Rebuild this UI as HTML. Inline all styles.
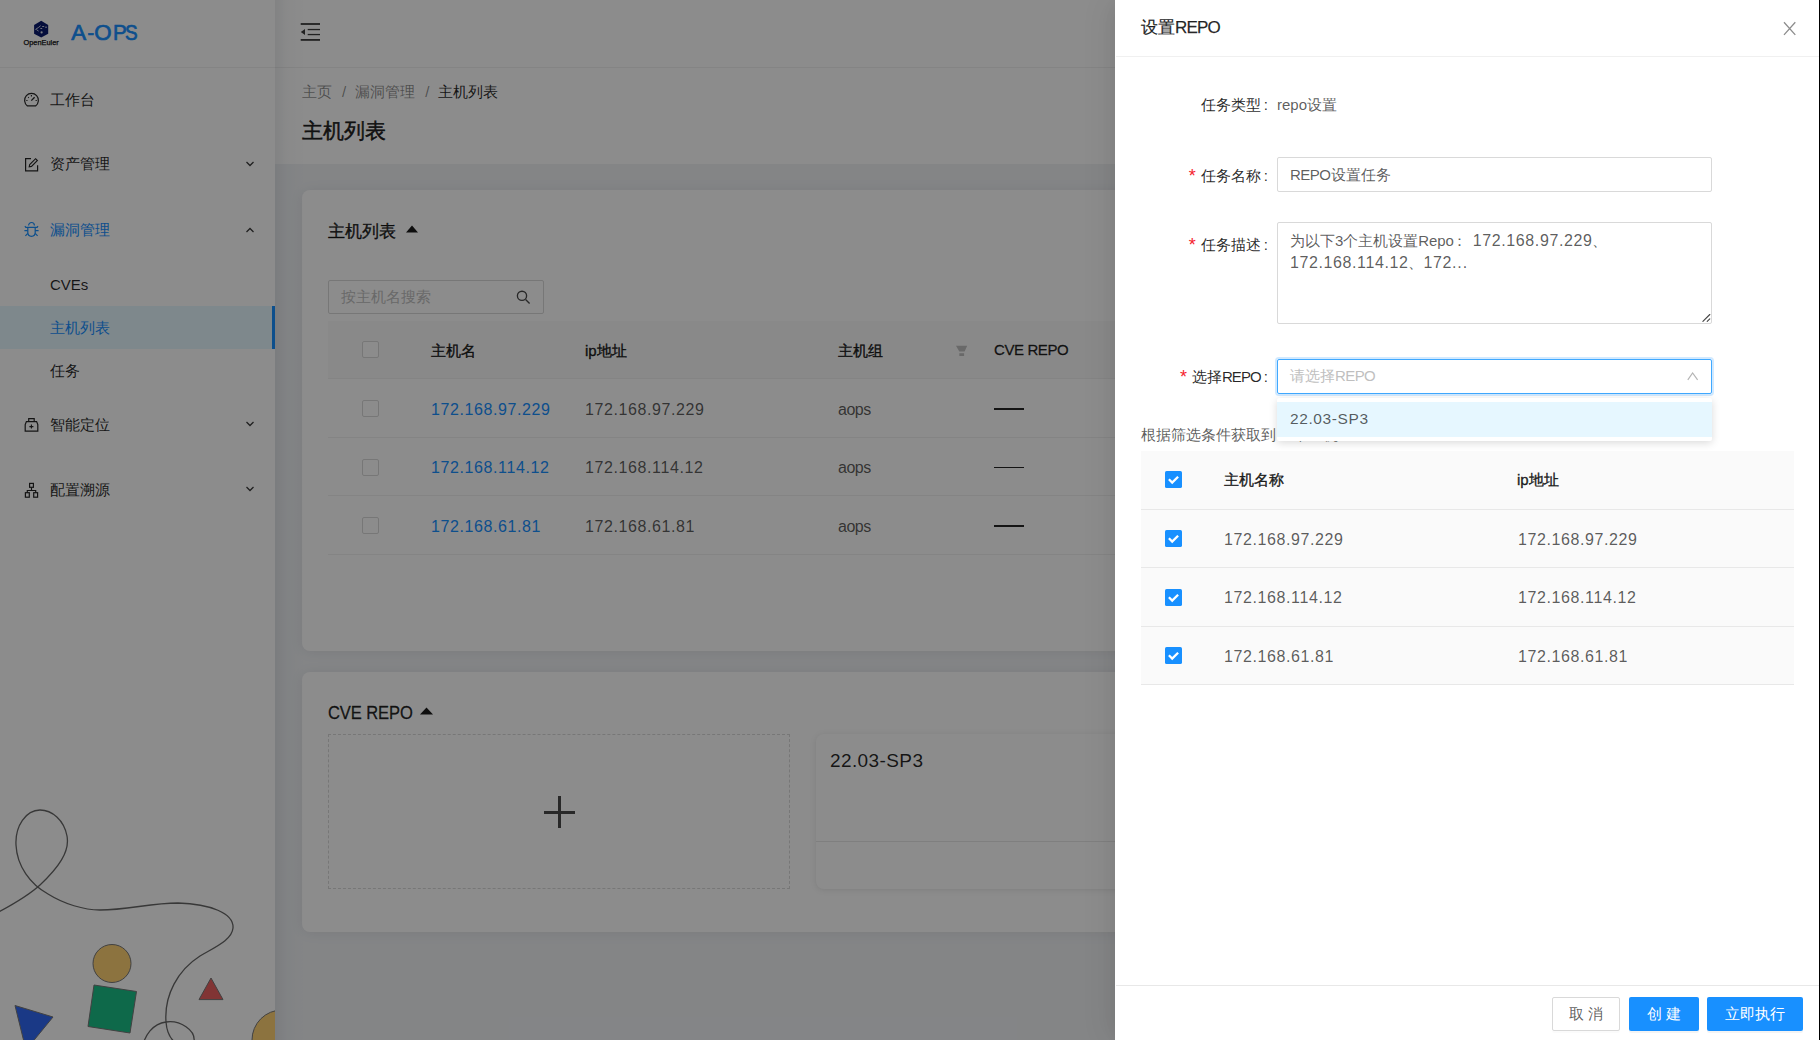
<!DOCTYPE html>
<html><head><meta charset="utf-8">
<style>
*{box-sizing:border-box;margin:0;padding:0}
html,body{width:1820px;height:1040px;overflow:hidden}
body{position:relative;font-family:"Liberation Sans",sans-serif;color:rgba(0,0,0,.85);background:#f0f2f5}
.abs{position:absolute;white-space:nowrap}
.sider{position:absolute;left:0;top:0;width:275px;height:1040px;background:#fff;overflow:hidden;z-index:2}
.sidershadow{position:absolute;left:275px;top:0;width:30px;height:1040px;background:linear-gradient(to right,rgba(0,21,41,.07),rgba(0,21,41,.02) 40%,rgba(0,21,41,0));z-index:3}
.hdr{position:absolute;left:275px;top:0;width:1545px;height:68px;background:#fff;border-bottom:1px solid #f0f0f0}
.pghdr{position:absolute;left:275px;top:68px;width:1545px;height:96px;background:#fff}
.card{position:absolute;background:#fff;border-radius:8px;box-shadow:0 1px 14px rgba(0,0,0,.07)}
.mask{position:absolute;left:0;top:0;width:1820px;height:1040px;background:rgba(0,0,0,.45);z-index:10}
.drawer{position:absolute;z-index:11;left:1115px;top:0;width:705px;height:1040px;background:#fff;box-shadow:-6px 0 16px -8px rgba(0,0,0,.08),-9px 0 28px 0 rgba(0,0,0,.05)}
.t16{font-size:16px;line-height:24px}
.cb{position:absolute;width:17px;height:17px;border:1px solid #d9d9d9;border-radius:2px;background:#fff}
.cbc{position:absolute;width:17px;height:17px;border-radius:1.6px;background:#1890ff}
.cbc svg{position:absolute;left:0;top:0}
.lbl{position:absolute;right:552px;font-size:15px;line-height:20px;color:rgba(0,0,0,.85);white-space:nowrap}
.lbl b{font-weight:normal;color:#f5222d;font-size:18px;position:relative;top:1px;margin-right:5px}
.lbl i{font-style:normal;margin-left:3px}
.med{-webkit-text-stroke:0.35px currentColor}
.line{position:absolute;height:1px;background:#e8e8e8}
</style></head>
<body>
<!-- SIDEBAR -->
<div class="sider">
  <div class="abs" style="left:0;top:67px;width:275px;height:1px;background:#f0f0f0"></div>
  <!-- logo -->
  <svg class="abs" style="left:30px;top:18px" width="22" height="22" viewBox="30 18 22 22">
    <polygon points="41.2,20.8 48.2,25 48.2,33.8 41.2,37.5 34.1,33.8 34.1,25" fill="#0a1a6e"/>
    <path d="M35.4 29.5 L38.6 27.4 L40.6 25.7 M36.4 29.6 L38.6 31.1 M40.4 28.5 H42.2 M42.2 26.5 H44.2 M45.1 27.2 H47" stroke="#dfe3ee" stroke-width="0.9" fill="none"/>
    <circle cx="41.6" cy="32.4" r="1.1" fill="#dfe3ee"/>
  </svg>
  <div class="abs" style="left:23.5px;top:38px;font-size:7.4px;line-height:10px;-webkit-text-stroke:0.25px currentColor;color:#111;letter-spacing:0px">OpenEuler</div>
  <div class="abs" style="left:0;top:19.3px;font-size:22.3px;line-height:28px;color:#1890ff;-webkit-text-stroke:0.7px currentColor">
    <span class="abs" style="left:71.3px">A</span><span class="abs" style="left:87.4px;font-size:20px">-</span><span class="abs" style="left:94.3px">O</span><span class="abs" style="left:112.8px;transform:scaleX(.93);transform-origin:left">P</span><span class="abs" style="left:125.3px;transform:scaleX(.85);transform-origin:left">S</span>
  </div>

  <!-- menu -->
  <svg class="abs" style="left:18px;top:85px" width="30" height="30" viewBox="18 85 30 30" fill="none" stroke="#262626" stroke-width="1.2">
    <path d="M27.4 105.9 A6.9 6.9 0 1 1 35.6 105.9 Z"/><path d="M31.3 100.6 L34.6 97.3" stroke-width="1.3"/>
    <path d="M31.4 94.9 V96.6 M28.2 97.2 L28.8 97.8 M26.3 100.5 H27.5 M35.6 100.5 H36.8" stroke-width="1.1"/>
  </svg>
<div class="abs" style="left:50px;top:90px;font-size:15px;line-height:20px;color:rgba(0,0,0,.85)">工作台</div>

  <svg class="abs" style="left:18px;top:150px" width="30" height="30" viewBox="18 150 30 30" fill="none" stroke="#262626" stroke-width="1.2">
    <path d="M31 158.6 H25.6 V170.8 H37.6 V165.2"/>
    <path d="M29.2 166.9 L29.7 164.6 L35.6 158.7 L37.4 160.5 L31.5 166.4 Z" stroke-width="1.1"/>
  </svg>
  <div class="abs" style="left:50px;top:154px;font-size:15px;line-height:20px;color:rgba(0,0,0,.85)">资产管理</div>
  <svg class="abs" style="left:245px;top:160px" width="10" height="8" viewBox="0 0 10 8"><path d="M1.5 2 L5 5.5 L8.5 2" stroke="#3a3a3a" stroke-width="1.25" fill="none"/></svg>

  <svg class="abs" style="left:18px;top:215px" width="30" height="30" viewBox="18 215 30 30" fill="none" stroke="#1890ff" stroke-width="1.2">
    <path d="M28.6 225.4 A2.9 2.9 0 0 1 34.4 225.4"/>
    <path d="M24.9 226.2 L25.8 227.4 H37.1 L38 226.2"/>
    <path d="M27.8 227.4 V232.6 C27.8 235 29.5 236.3 31.5 236.3 C33.5 236.3 35.2 235 35.2 232.6 V227.4"/>
    <path d="M24.4 230.6 H27.8 M35.2 230.6 H38.6 M27.8 233.3 L25.4 235.8 M35.2 233.3 L37.6 235.8"/>
  </svg>
  <div class="abs" style="left:50px;top:220px;font-size:15px;line-height:20px;color:#1890ff">漏洞管理</div>
  <svg class="abs" style="left:245px;top:226px" width="10" height="8" viewBox="0 0 10 8"><path d="M1.5 6 L5 2.5 L8.5 6" stroke="#3a3a3a" stroke-width="1.25" fill="none"/></svg>

  <div class="abs" style="left:50px;top:275px;font-size:15px;line-height:20px;color:rgba(0,0,0,.85)">CVEs</div>
  <div class="abs" style="left:0;top:306px;width:275px;height:43px;background:#e6f7ff"></div>
  <div class="abs" style="left:272px;top:306px;width:3px;height:43px;background:#1890ff"></div>
  <div class="abs" style="left:50px;top:318px;font-size:15px;line-height:20px;color:#1890ff">主机列表</div>
  <div class="abs" style="left:50px;top:361px;font-size:15px;line-height:20px;color:rgba(0,0,0,.85)">任务</div>

  <svg class="abs" style="left:18px;top:410px" width="30" height="30" viewBox="18 410 30 30" fill="none" stroke="#262626" stroke-width="1.2">
    <path d="M28.7 421.4 V418.7 H34.2 V421.4"/>
    <path d="M26.4 421.6 H36.6 L37.8 424.6 V431.1 H25.2 V424.6 Z"/>
    <path d="M31.4 424.6 V428.6 M29.4 426.6 H33.4" stroke-width="1.1"/>
  </svg>
  <div class="abs" style="left:50px;top:415px;font-size:15px;line-height:20px;color:rgba(0,0,0,.85)">智能定位</div>
  <svg class="abs" style="left:245px;top:420px" width="10" height="8" viewBox="0 0 10 8"><path d="M1.5 2 L5 5.5 L8.5 2" stroke="#3a3a3a" stroke-width="1.25" fill="none"/></svg>

  <svg class="abs" style="left:18px;top:475px" width="30" height="30" viewBox="18 475 30 30" fill="none" stroke="#262626" stroke-width="1.2">
    <rect x="29.6" y="483.4" width="3.8" height="3.9"/><rect x="25.4" y="492.7" width="3.9" height="4.5"/><rect x="33.7" y="492.7" width="3.9" height="4.5"/>
    <path d="M31.5 487.3 V490.5 M27.3 492.7 V490.5 H35.7 V492.7"/>
  </svg>
  <div class="abs" style="left:50px;top:480px;font-size:15px;line-height:20px;color:rgba(0,0,0,.85)">配置溯源</div>
  <svg class="abs" style="left:245px;top:485px" width="10" height="8" viewBox="0 0 10 8"><path d="M1.5 2 L5 5.5 L8.5 2" stroke="#3a3a3a" stroke-width="1.25" fill="none"/></svg>

  <!-- decoration -->
  <svg class="abs" style="left:0;top:780px" width="275" height="260" viewBox="0 780 275 260">
    <path d="M-5 914 C 12 905, 28 896, 40 885 C 58 868, 70 852, 67 836 C 64 820, 52 810, 40 810 C 26 810, 15 826, 16 845 C 17 866, 30 884, 48 894 C 64 904, 84 910, 100 910 C 128 910, 150 903, 178 903 C 210 904, 234 913, 233 928 C 232 940, 215 947, 200 956 C 178 970, 164 995, 166 1022 C 168 1048, 190 1050, 194 1042 C 196 1030, 180 1020, 166 1022 C 152 1024, 145 1036, 143 1045" stroke="#666" stroke-width="1.3" fill="none"/>
    <circle cx="112" cy="963.5" r="19" fill="#ffd174" stroke="#777" stroke-width="1"/>
    <polygon points="94,985 136.5,991.5 130,1033 88,1026.5" fill="#1bbf88" stroke="#777" stroke-width="1"/>
    <polygon points="211,978 199,999.6 223,999.6" fill="#ec5f5f" stroke="#777" stroke-width="1"/>
    <polygon points="15,1005.5 53,1017 26,1050" fill="#3169f5" stroke="#777" stroke-width="1"/>
    <circle cx="282" cy="1040" r="30" fill="#ffd174" stroke="#777" stroke-width="1"/>
  </svg>
</div>
<div class="sidershadow"></div>
<div class="hdr">
  <svg class="abs" style="left:20px;top:18px" width="30" height="28" viewBox="295 18 30 28" fill="#3c3c3c">
    <rect x="300.7" y="23.1" width="19.3" height="1.8"/><rect x="307.7" y="28.9" width="12.3" height="1.3"/>
    <rect x="307.7" y="33.9" width="12.3" height="1.3"/><rect x="300.7" y="39" width="19.3" height="1.8"/>
    <polygon points="300.8,32 305,28.9 305,35.1"/>
  </svg>
</div>
<div class="pghdr">
  <div class="abs" style="left:27px;top:14px;font-size:15px;line-height:20px;color:rgba(0,0,0,.45)">主页<span style="margin:0 9px 0 10px">/</span>漏洞管理<span style="margin:0 9px 0 10px">/</span><span style="color:rgba(0,0,0,.85)">主机列表</span></div>
  <div class="abs" style="left:27px;top:50px;font-size:21px;line-height:26px;-webkit-text-stroke:0.5px currentColor;color:rgba(0,0,0,.85)">主机列表</div>
</div>
<div class="card" style="left:302px;top:190px;width:1500px;height:461px">
  <div class="abs" style="left:26px;top:30px;font-size:17px;line-height:24px;-webkit-text-stroke:0.4px currentColor;color:rgba(0,0,0,.85)">主机列表</div>
  <svg class="abs" style="left:104px;top:35px" width="12" height="8" viewBox="0 0 12 8"><polygon points="6,0.5 12,7.5 0,7.5" fill="#1a1a1a"/></svg>
  <div class="abs" style="left:26px;top:90px;width:216px;height:34px;border:1px solid #d9d9d9;border-radius:2px"></div>
  <div class="abs" style="left:39px;top:97px;font-size:15px;line-height:20px;color:#bfbfbf">按主机名搜索</div>
  <svg class="abs" style="left:214px;top:100px" width="15" height="15" viewBox="0 0 15 15" fill="none" stroke="#4a4a4a" stroke-width="1.35"><circle cx="6" cy="5.8" r="4.6"/><path d="M9.6 9.6 L13.6 13.6"/></svg>
  <div class="abs" style="left:26px;top:131px;width:1474px;height:58px;background:#fafafa;border-bottom:1px solid #f0f0f0"></div>
  <div class="cb" style="left:60px;top:151px"></div>
  <div class="abs" style="left:129px;top:151px;font-size:15px;line-height:20px;-webkit-text-stroke:0.4px currentColor;color:rgba(0,0,0,.85)">主机名</div>
  <div class="abs" style="left:283px;top:151px;font-size:15px;line-height:20px;-webkit-text-stroke:0.4px currentColor;color:rgba(0,0,0,.85)">ip地址</div>
  <div class="abs" style="left:536px;top:151px;font-size:15px;line-height:20px;-webkit-text-stroke:0.4px currentColor;color:rgba(0,0,0,.85)">主机组</div>
  <svg class="abs" style="left:654px;top:155px" width="12" height="11" viewBox="0 0 12 11"><path d="M0 0.8 H11.2 L8.6 6.6 H3.3 Z M3.3 8.2 H8.1 V10.9 H3.3 Z" fill="#bfbfbf"/></svg>
  <div class="abs" style="left:692px;top:150px;font-size:15px;line-height:20px;-webkit-text-stroke:0.3px currentColor;letter-spacing:-0.4px;color:rgba(0,0,0,.85)">CVE REPO</div>
  <div class="abs" style="left:26px;top:246.5px;width:1474px;height:1px;background:#f0f0f0"></div>
  <div class="cb" style="left:60px;top:210.0px"></div>
  <div class="abs" style="left:129px;top:209.5px;font-size:16px;line-height:20px;color:#1890ff;letter-spacing:0.6px">172.168.97.229</div>
  <div class="abs" style="left:283px;top:209.5px;font-size:16px;line-height:20px;color:rgba(0,0,0,.65);letter-spacing:0.6px">172.168.97.229</div>
  <div class="abs" style="left:536px;top:209.5px;font-size:16px;line-height:20px;color:rgba(0,0,0,.65);letter-spacing:-0.5px">aops</div>
  <div class="abs" style="left:692px;top:218.0px;width:30px;height:1.5px;background:#262626"></div>
<div class="abs" style="left:26px;top:305.0px;width:1474px;height:1px;background:#f0f0f0"></div>
  <div class="cb" style="left:60px;top:268.5px"></div>
  <div class="abs" style="left:129px;top:268.0px;font-size:16px;line-height:20px;color:#1890ff;letter-spacing:0.6px">172.168.114.12</div>
  <div class="abs" style="left:283px;top:268.0px;font-size:16px;line-height:20px;color:rgba(0,0,0,.65);letter-spacing:0.6px">172.168.114.12</div>
  <div class="abs" style="left:536px;top:268.0px;font-size:16px;line-height:20px;color:rgba(0,0,0,.65);letter-spacing:-0.5px">aops</div>
  <div class="abs" style="left:692px;top:276.5px;width:30px;height:1.5px;background:#262626"></div>
<div class="abs" style="left:26px;top:363.5px;width:1474px;height:1px;background:#f0f0f0"></div>
  <div class="cb" style="left:60px;top:327.0px"></div>
  <div class="abs" style="left:129px;top:326.5px;font-size:16px;line-height:20px;color:#1890ff;letter-spacing:0.6px">172.168.61.81</div>
  <div class="abs" style="left:283px;top:326.5px;font-size:16px;line-height:20px;color:rgba(0,0,0,.65);letter-spacing:0.6px">172.168.61.81</div>
  <div class="abs" style="left:536px;top:326.5px;font-size:16px;line-height:20px;color:rgba(0,0,0,.65);letter-spacing:-0.5px">aops</div>
  <div class="abs" style="left:692px;top:335.0px;width:30px;height:1.5px;background:#262626"></div>

</div>
<div class="card" style="left:302px;top:672px;width:1500px;height:260px">
  <div class="abs" style="left:26px;top:29px;font-size:17.5px;line-height:24px;-webkit-text-stroke:0.3px currentColor;letter-spacing:-0.1px;transform:scaleX(.945);transform-origin:left;color:rgba(0,0,0,.85)">CVE REPO</div>
  <svg class="abs" style="left:118px;top:35px" width="13" height="8" viewBox="0 0 13 8"><polygon points="6.5,0.5 13,7.5 0,7.5" fill="#1a1a1a"/></svg>
  <div class="abs" style="left:26px;top:62px;width:462px;height:155px;border:1px dashed #d9d9d9"></div>
  <div class="abs" style="left:242px;top:138.5px;width:30.5px;height:3px;background:#4a4a4a"></div>
  <div class="abs" style="left:255.5px;top:123.5px;width:3px;height:32px;background:#4a4a4a"></div>
  <div class="abs" style="left:514px;top:62px;width:700px;height:155px;border-radius:8px;box-shadow:0 1px 6px rgba(0,0,0,.1);background:#fff">
    <div class="abs" style="left:14px;top:15px;font-size:19px;line-height:24px;color:rgba(0,0,0,.85);letter-spacing:0.4px">22.03-SP3</div>
    <div class="abs" style="left:0;top:107px;width:700px;height:1px;background:#e8e8e8"></div>
  </div>
</div>

<div class="mask"></div>

<!-- DRAWER -->
<div class="drawer">
  <div class="abs" style="left:26px;top:17px;font-size:17px;line-height:22px;color:rgba(0,0,0,.85);-webkit-text-stroke:0.25px currentColor">设置<span style="letter-spacing:-0.8px">REPO</span></div>
  <svg class="abs" style="left:668px;top:21px" width="14" height="15" viewBox="0 0 14 15"><path d="M1 1.3 L12.3 13.9 M12.3 1.3 L1 13.9" stroke="rgba(0,0,0,.45)" stroke-width="1.3"/></svg>
  <div class="abs" style="left:1px;top:56px;width:703px;height:1px;background:#f0f0f0"></div>

  <div class="lbl" style="top:95px">任务类型<i>:</i></div>
  <div class="abs" style="left:162px;top:95px;font-size:15px;line-height:20px;color:rgba(0,0,0,.65)">repo设置</div>

  <div class="lbl" style="top:165px"><b>*</b>任务名称<i>:</i></div>
  <div class="abs" style="left:162px;top:157px;width:435px;height:35px;border:1px solid #d9d9d9;border-radius:2px"></div>
  <div class="abs" style="left:175px;top:165px;font-size:15px;line-height:20px;color:rgba(0,0,0,.65)"><span style="letter-spacing:-0.5px">REPO</span>设置任务</div>

  <div class="lbl" style="top:234px"><b>*</b>任务描述<i>:</i></div>
  <div class="abs" style="left:162px;top:222px;width:435px;height:102px;border:1px solid #d9d9d9;border-radius:2px"></div>
  <div class="abs" style="left:175px;top:230.5px;font-size:15px;line-height:20px;color:rgba(0,0,0,.65)">为以下3个主机设置<span style="letter-spacing:-0.1px">Repo</span><span style="margin-left:-2px;margin-right:6px">：</span><span style="font-size:16px;letter-spacing:0.6px">172.168.97.229</span>、</div>
  <div class="abs" style="left:175px;top:253px;font-size:16px;line-height:20px;color:rgba(0,0,0,.65);letter-spacing:0.6px">172.168.114.12<span style="font-size:15px;letter-spacing:0">、</span>172<span style="letter-spacing:0.9px">...</span></div>
  <svg class="abs" style="left:580px;top:308px" width="20" height="20" viewBox="1695 308 20 20"><path d="M1702.9 321.4 L1709.8 314.5 M1707.2 321.4 L1709.8 318.8" stroke="#444" stroke-width="1.1" stroke-linecap="round"/></svg>

  <div class="lbl" style="top:366px"><b>*</b>选择<span style="letter-spacing:-0.9px">REPO</span><i>:</i></div>
  <div class="abs" style="left:162px;top:359px;width:435px;height:35px;border:1px solid #40a9ff;border-radius:2px;box-shadow:0 0 0 2px rgba(24,144,255,.2)"></div>
  <div class="abs" style="left:175px;top:366px;font-size:15px;line-height:20px;color:#bfbfbf">请选择<span style="letter-spacing:-0.6px">REPO</span></div>
  <svg class="abs" style="left:572px;top:372px" width="12" height="9" viewBox="0 0 12 9"><path d="M0.8 7.9 L5.6 1 L10.6 7.9" stroke="#b5b5b5" stroke-width="1.2" fill="none"/></svg>

  <div class="abs" style="left:26px;top:425px;font-size:15px;line-height:20px;color:rgba(0,0,0,.65)">根据筛选条件获取到 3 个主机</div>

  <div class="abs" style="left:26px;top:451px;width:653px;height:234px;background:#fafafa"></div>
  <div class="abs" style="left:26px;top:509px;width:653px;height:1px;background:#e8e8e8"></div>
  <div class="cbc" style="left:50px;top:471px"><svg width="17" height="17"><path d="M3.9 8.3 L7.2 11.6 L13.1 5.7" stroke="#fff" stroke-width="2.3" fill="none"/></svg></div>
  <div class="abs" style="left:109px;top:470px;font-size:15px;line-height:20px;-webkit-text-stroke:0.4px currentColor;color:rgba(0,0,0,.85)">主机名称</div>
  <div class="abs" style="left:402px;top:470px;font-size:15px;line-height:20px;-webkit-text-stroke:0.4px currentColor;color:rgba(0,0,0,.85)">ip地址</div>
  <div class="abs" style="left:26px;top:567px;width:653px;height:1px;background:#e8e8e8"></div>
  <div class="cbc" style="left:50px;top:530.0px"><svg width="17" height="17"><path d="M3.9 8.3 L7.2 11.6 L13.1 5.7" stroke="#fff" stroke-width="2.3" fill="none"/></svg></div>
  <div class="abs" style="left:109px;top:529.5px;font-size:16px;line-height:20px;color:rgba(0,0,0,.65);letter-spacing:0.6px">172.168.97.229</div>
  <div class="abs" style="left:403px;top:529.5px;font-size:16px;line-height:20px;color:rgba(0,0,0,.65);letter-spacing:0.6px">172.168.97.229</div>
  <div class="abs" style="left:26px;top:626px;width:653px;height:1px;background:#e8e8e8"></div>
  <div class="cbc" style="left:50px;top:588.5px"><svg width="17" height="17"><path d="M3.9 8.3 L7.2 11.6 L13.1 5.7" stroke="#fff" stroke-width="2.3" fill="none"/></svg></div>
  <div class="abs" style="left:109px;top:588.0px;font-size:16px;line-height:20px;color:rgba(0,0,0,.65);letter-spacing:0.6px">172.168.114.12</div>
  <div class="abs" style="left:403px;top:588.0px;font-size:16px;line-height:20px;color:rgba(0,0,0,.65);letter-spacing:0.6px">172.168.114.12</div>
  <div class="abs" style="left:26px;top:684px;width:653px;height:1px;background:#e8e8e8"></div>
  <div class="cbc" style="left:50px;top:647.0px"><svg width="17" height="17"><path d="M3.9 8.3 L7.2 11.6 L13.1 5.7" stroke="#fff" stroke-width="2.3" fill="none"/></svg></div>
  <div class="abs" style="left:109px;top:646.5px;font-size:16px;line-height:20px;color:rgba(0,0,0,.65);letter-spacing:0.6px">172.168.61.81</div>
  <div class="abs" style="left:403px;top:646.5px;font-size:16px;line-height:20px;color:rgba(0,0,0,.65);letter-spacing:0.6px">172.168.61.81</div>

  <div class="abs" style="left:162px;top:398px;width:435px;height:43px;background:#fff;border-radius:2px;box-shadow:0 2px 8px rgba(0,0,0,.15)">
    <div class="abs" style="left:0;top:4px;width:435px;height:35px;background:#e6f7ff"></div>
    <div class="abs" style="left:13px;top:11px;font-size:15.5px;line-height:20px;color:rgba(0,0,0,.65);letter-spacing:0.6px">22.03-SP3</div>
  </div>

  <div class="abs" style="left:1px;top:985px;width:703px;height:1px;background:#e8e8e8"></div>
  <div class="abs" style="left:437px;top:997px;width:68px;height:34px;border:1px solid #d9d9d9;border-radius:2px;box-shadow:0 2px 0 rgba(0,0,0,.015)"></div>
  <div class="abs" style="left:454px;top:1004px;font-size:15px;line-height:20px;color:rgba(0,0,0,.65);letter-spacing:4px">取消</div>
  <div class="abs" style="left:514px;top:997px;width:70px;height:34px;background:#1890ff;border-radius:2px;box-shadow:0 2px 0 rgba(0,0,0,.045)"></div>
  <div class="abs" style="left:532px;top:1004px;font-size:15px;line-height:20px;color:#fff;letter-spacing:4px">创建</div>
  <div class="abs" style="left:592px;top:997px;width:96px;height:34px;background:#1890ff;border-radius:2px;box-shadow:0 2px 0 rgba(0,0,0,.045)"></div>
  <div class="abs" style="left:610px;top:1004px;font-size:15px;line-height:20px;color:#fff">立即执行</div>
</div>
<div class="abs" style="left:1819px;top:0;width:1px;height:1040px;background:#000;z-index:12"></div>
</body></html>
